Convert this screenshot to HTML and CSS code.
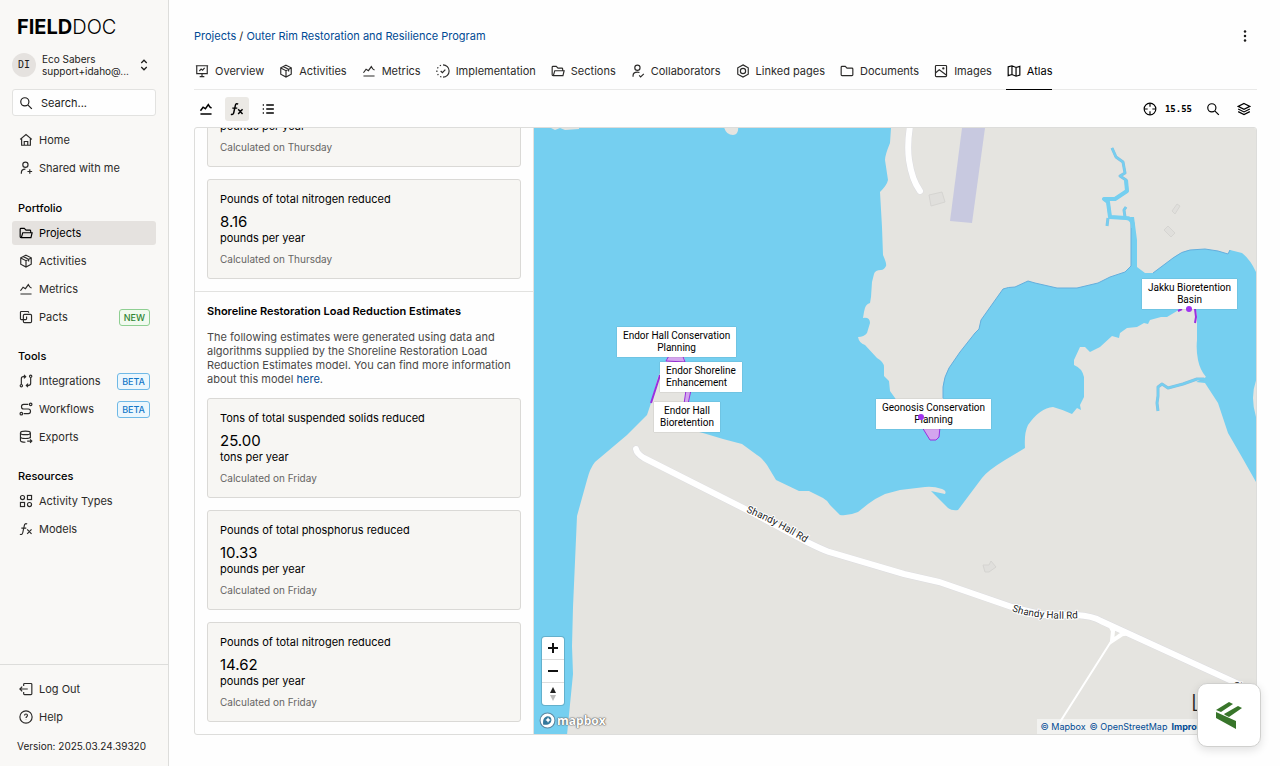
FILE: index.html
```html
<!DOCTYPE html>
<html lang="en">
<head>
<meta charset="UTF-8" />
<meta name="viewport" content="width=device-width, initial-scale=1" />
<title>Outer Rim Restoration and Resilience Program - Atlas</title>
<link rel="stylesheet" href="styles.css">
</head>
<body>

<!-- Icon sprite -->
<svg class="sprite" aria-hidden="true">
  <symbol id="i-search" viewBox="0 0 24 24"><circle cx="10" cy="10" r="7"/><path d="M15.5 15.5 22 22"/></symbol>
  <symbol id="i-home" viewBox="0 0 24 24"><path d="M2 11 12 2.500 22 11M4.500 9.500V21h15V9.500M9 21v-6.500h6V21"/></symbol>
  <symbol id="i-user-plus" viewBox="0 0 24 24"><circle cx="11" cy="6.500" r="4.500"/><path d="M4 22v-2c0-3.500 2.500-6 7-6M18.500 14v8M14.500 18h8"/></symbol>
  <symbol id="i-user-check" viewBox="0 0 24 24"><circle cx="11" cy="6.500" r="4.500"/><path d="M3.500 22v-2c0-3.500 3-6 7.500-6 1.500 0 2.500.2 3.500.6M14 19.500l2.500 2.500 5.500-5"/></symbol>
  <symbol id="i-folder-open" viewBox="0 0 24 24"><path d="M5 20H3.500C2.500 20 2 19.500 2 18.500v-13C2 4.500 2.500 4 3.500 4H9l3 3h6.500c1 0 1.500.5 1.500 1.500V11M4 20l2.500-8.500h16L20.500 20z"/></symbol>
  <symbol id="i-folder" viewBox="0 0 24 24"><path d="M2 5.500C2 4.500 2.500 4 3.500 4H9l3 3h8.500c1 0 1.500.5 1.500 1.500v10c0 1-.5 1.500-1.500 1.500h-17c-1 0-1.500-.5-1.500-1.500z"/></symbol>
  <symbol id="i-box" viewBox="0 0 24 24"><path d="M12 2 21 6.500v11L12 22.500 3 17.500v-11zM3 7l9 4.500L21 7M12 11.500v11M7.500 4.500l9 4.500v4"/></symbol>
  <symbol id="i-metrics" viewBox="0 0 24 24"><path d="M2.500 20.500h19M2.500 15l4.500-6 4 2.500 5-7 2.500 4 3 2"/></symbol>
  <symbol id="i-copy" viewBox="0 0 24 24"><rect x="7.500" y="7.500" width="14" height="14" rx="2"/><path d="M16.500 4.500V4c0-1-.5-1.500-1.500-1.500H4C3 2.500 2.500 3 2.500 4v11c0 1 .5 1.500 1.500 1.500h7.500c1 0 1.500-.5 1.500-1.500v-4"/></symbol>
  <symbol id="i-integrations" viewBox="0 0 24 24"><circle cx="4" cy="20" r="2"/><circle cx="20" cy="4" r="2"/><path d="M4 17.500V8c0-2 1-3.500 3.500-3.500H11M8.500 1.500l3 3-3 3M20 6.500V16c0 2-1 3.500-3.500 3.500H13M15.500 16.500l-3 3 3 3"/></symbol>
  <symbol id="i-workflows" viewBox="0 0 24 24"><circle cx="4" cy="20" r="2.200"/><circle cx="20" cy="4" r="2.200"/><path d="M16 4H8c-5 0-5 8 0 8h8c5 0 5 8 0 8H8"/></symbol>
  <symbol id="i-exports" viewBox="0 0 24 24"><ellipse cx="11" cy="5" rx="8.500" ry="3"/><path d="M2.500 5v13c0 2 4 3 8.500 3M19.500 5v9M2.500 11.500c0 2 4 3 8.500 3s8.500-1 8.500-3M14 19h8M19 16l3 3-3 3"/></symbol>
  <symbol id="i-types" viewBox="0 0 24 24"><circle cx="6" cy="6" r="3.500"/><rect x="14.500" y="2.500" width="7" height="7"/><rect x="2.500" y="14.500" width="7" height="7"/><circle cx="18" cy="18" r="3.500"/></symbol>
  <symbol id="i-fx" viewBox="0 0 24 24"><path d="M14 3.500c-3-1.500-4.500 0-5 3L6.500 18c-.6 3-2 4-5 3M4 10.500h8.500M14 12.500l7.500 8M21.500 12.500l-7.500 8"/></symbol>
  <symbol id="i-logout" viewBox="0 0 24 24"><path d="M8 7V4c0-1 .5-1.500 1.500-1.500h11c1 0 1.500.5 1.500 1.500v16c0 1-.5 1.500-1.500 1.500h-11C8.500 21.500 8 21 8 20v-3M15 12H1.500M5.500 8l-4 4 4 4"/></symbol>
  <symbol id="i-help" viewBox="0 0 24 24"><circle cx="12" cy="12" r="10.500"/><path d="M9.500 9.500c0-3.500 5-3.500 5 0 0 2-2.500 2-2.500 4M12 16.500v.8"/></symbol>
  <symbol id="i-sort" viewBox="0 0 24 24"><path d="M6.500 8 12 2.500 17.500 8M6.500 16l5.500 5.500 5.500-5.500"/></symbol>
  <symbol id="i-overview" viewBox="0 0 24 24"><path d="M1.500 3h21M3 3v13.500h18V3M12 16.500V21M8 21.500h8M7.500 12l3-3.500 2.500 2 3.500-4"/></symbol>
  <symbol id="i-progress" viewBox="0 0 24 24"><path d="M12 1.500a10.500 10.500 0 0 1 0 21M8.500 2.100l-2 .9M3.700 5.500l-1.200 2M1.500 11v2.500M2.800 17.200l1.200 1.900M7 21.300l2.300.9M8 12l3 3 5-5.500"/></symbol>
  <symbol id="i-linked" viewBox="0 0 24 24"><path d="M12 1.500 21 6.500v11l-9 5-9-5v-11z"/><circle cx="12" cy="12" r="4.500"/></symbol>
  <symbol id="i-image" viewBox="0 0 24 24"><rect x="2.500" y="2.500" width="19" height="19" rx="1.500"/><path d="M2.500 15.500 9 10l12 9"/><circle cx="16" cy="7.500" r="1"/></symbol>
  <symbol id="i-map" viewBox="0 0 24 24"><path d="M2 5l6.500-2 7 3L22 4v15l-6.500 2-7-3L2 20zM8.500 3v15M15.500 6v15"/></symbol>
  <symbol id="i-list" viewBox="0 0 24 24"><path d="M9 5h13M9 12h13M9 19h13M3 5h2M3 12h2M3 19h2"/></symbol>
  <symbol id="i-crosshair" viewBox="0 0 24 24"><circle cx="12" cy="12" r="10"/><path d="M12 2v6M12 16v6M2 12h6M16 12h6"/></symbol>
  <symbol id="i-layers" viewBox="0 0 24 24"><path d="M12 2.500 22 7.500l-10 5-10-5zM2 12l10 5 10-5M2 16.500l10 5 10-5"/></symbol>
</svg>

<aside class="sidebar">
  <div class="sidebar-top">
    <a class="logo" href="#"><b>FIELD</b>DOC</a>

    <button class="account" type="button">
      <span class="avatar">DI</span>
      <span class="account-name">Eco Sabers<br>support+idaho@...</span>
      <svg class="icon sm bold"><use href="#i-sort"/></svg>
    </button>

    <label class="search">
      <svg class="icon"><use href="#i-search"/></svg>
      <input type="text" placeholder="Search..." aria-label="Search" />
    </label>

    <nav class="nav primary">
      <a href="#"><svg class="icon"><use href="#i-home"/></svg>Home</a>
      <a href="#"><svg class="icon"><use href="#i-user-plus"/></svg>Shared with me</a>
    </nav>

    <nav class="nav">
      <h2>Portfolio</h2>
      <a class="active" href="#"><svg class="icon"><use href="#i-folder-open"/></svg>Projects</a>
      <a href="#"><svg class="icon"><use href="#i-box"/></svg>Activities</a>
      <a href="#"><svg class="icon"><use href="#i-metrics"/></svg>Metrics</a>
      <a href="#"><svg class="icon"><use href="#i-copy"/></svg>Pacts<span class="tag new">NEW</span></a>
    </nav>

    <nav class="nav">
      <h2>Tools</h2>
      <a href="#"><svg class="icon"><use href="#i-integrations"/></svg>Integrations<span class="tag beta">BETA</span></a>
      <a href="#"><svg class="icon"><use href="#i-workflows"/></svg>Workflows<span class="tag beta">BETA</span></a>
      <a href="#"><svg class="icon"><use href="#i-exports"/></svg>Exports</a>
    </nav>

    <nav class="nav">
      <h2>Resources</h2>
      <a href="#"><svg class="icon"><use href="#i-types"/></svg>Activity Types</a>
      <a href="#"><svg class="icon"><use href="#i-fx"/></svg>Models</a>
    </nav>
  </div>

  <div class="sidebar-bottom">
    <nav class="nav">
      <a href="#"><svg class="icon"><use href="#i-logout"/></svg>Log Out</a>
      <a href="#"><svg class="icon"><use href="#i-help"/></svg>Help</a>
    </nav>
    <p class="version">Version: 2025.03.24.39320</p>
  </div>
</aside>

<main class="main">
  <header class="page-header">
    <div class="breadcrumb">
      <a href="#">Projects</a> / <a href="#">Outer Rim Restoration and Resilience Program</a>
    </div>
    <button class="icon-btn" type="button" aria-label="More">
      <svg class="icon dots" viewBox="0 0 24 24"><circle cx="12" cy="3" r="2.500"/><circle cx="12" cy="12" r="2.500"/><circle cx="12" cy="21" r="2.500"/></svg>
    </button>
  </header>

  <nav class="tabs">
    <a href="#"><svg class="icon"><use href="#i-overview"/></svg>Overview</a>
    <a href="#"><svg class="icon"><use href="#i-box"/></svg>Activities</a>
    <a href="#"><svg class="icon"><use href="#i-metrics"/></svg>Metrics</a>
    <a href="#"><svg class="icon"><use href="#i-progress"/></svg>Implementation</a>
    <a href="#"><svg class="icon"><use href="#i-folder-open"/></svg>Sections</a>
    <a href="#"><svg class="icon"><use href="#i-user-check"/></svg>Collaborators</a>
    <a href="#"><svg class="icon"><use href="#i-linked"/></svg>Linked pages</a>
    <a href="#"><svg class="icon"><use href="#i-folder"/></svg>Documents</a>
    <a href="#"><svg class="icon"><use href="#i-image"/></svg>Images</a>
    <a class="active" href="#"><svg class="icon"><use href="#i-map"/></svg>Atlas</a>
  </nav>

  <div class="toolbar">
    <button class="icon-btn" type="button" aria-label="Metrics"><svg class="icon bold"><use href="#i-metrics"/></svg></button>
    <button class="icon-btn on" type="button" aria-label="Models"><svg class="icon bold"><use href="#i-fx"/></svg></button>
    <button class="icon-btn" type="button" aria-label="List"><svg class="icon bold"><use href="#i-list"/></svg></button>
    <div class="zoom-level"><svg class="icon"><use href="#i-crosshair"/></svg>15.55</div>
    <button class="icon-btn" type="button" aria-label="Search map"><svg class="icon"><use href="#i-search"/></svg></button>
    <button class="icon-btn" type="button" aria-label="Layers"><svg class="icon"><use href="#i-layers"/></svg></button>
  </div>

  <div class="atlas">
    <section class="panel">
      <div class="group">
        <article class="card">
          <p class="unit">pounds per year</p>
          <p class="date">Calculated on Thursday</p>
        </article>
        <article class="card">
          <h4>Pounds of total nitrogen reduced</h4>
          <p class="value">8.16</p>
          <p class="unit">pounds per year</p>
          <p class="date">Calculated on Thursday</p>
        </article>
      </div>
      <div class="group">
        <h3>Shoreline Restoration Load Reduction Estimates</h3>
        <p class="desc">The following estimates were generated using data and algorithms supplied by the Shoreline Restoration Load Reduction Estimates model. You can find more information about this model <a href="#">here</a>.</p>
        <article class="card">
          <h4>Tons of total suspended solids reduced</h4>
          <p class="value">25.00</p>
          <p class="unit">tons per year</p>
          <p class="date">Calculated on Friday</p>
        </article>
        <article class="card">
          <h4>Pounds of total phosphorus reduced</h4>
          <p class="value">10.33</p>
          <p class="unit">pounds per year</p>
          <p class="date">Calculated on Friday</p>
        </article>
        <article class="card">
          <h4>Pounds of total nitrogen reduced</h4>
          <p class="value">14.62</p>
          <p class="unit">pounds per year</p>
          <p class="date">Calculated on Friday</p>
        </article>
      </div>
    </section>

    <div class="map">
      <svg class="map-canvas" viewBox="534 128 722 606" preserveAspectRatio="xMinYMin slice">
        <!-- water -->
        <path class="water" d="M534 128H891L890 143Q885 155 885 160L888 180Q887 185 880 192L882 227 883 255Q887 264 886 266 884 270 881 270 875 270 874 274L872 282 871 297 870 303Q865 304 864 312L863 318Q870 317 870 323L867 333Q864 337 858 337 859 343 865 345L877 358Q884 362 884 367V376Q887 379 889 381L890 391 895 398 902 410 921 424 940 412 943 398V387Q944 377 949 368L960 352 975 333 979 329 981 320 1003 289Q1008 287 1015 287L1028 281 1035 283 1057 288H1077L1098 283 1110 277 1125 272 1131 266V217H1134L1137 240V267L1145 273H1153L1173 258Q1182 251 1190 250L1205 249 1218 251 1228 254 1230 250 1242 253Q1250 259 1256 272V482L1243 459 1228 433 1218 403 1205 383 1196 382 1206 377Q1200 370 1198 360 1196 350 1197 340V315L1195 306H1186L1177 311 1167 317H1161L1150 320 1148 324 1144 323 1137 327 1127 328 1120 333 1119 338 1112 336 1100 347 1090 352 1085 347H1080L1074 360V365Q1082 368 1084 377V397L1080 405 1081 410 1077 408 1072 414Q1064 410 1053 407 1040 408 1028 425 1024 433 1025 448L1005 460Q987 471 982 478L967 498 958 510Q952 511 948 508L931 491 945 494Q947 491 942 489 933 486 925 487L900 490 885 494Q876 498 868 504L858 512Q849 516 840 515L830 505Q827 500 823 498L809 491H799L776 480 767 465Q761 457 757 455L742 444 723 439 703 433 684 428 688 405 690 393 684 357 676 350 667 360 658 377 651 403 647 415 627 435 595 462Q590 468 587 480L577 516 573 607 572 646 573 674 567 735H534z"/>
        <path class="land" d="M724 127Q726 135 733 135 739 134 738 127zM549 127l6 3 5-2 5 2 14-1v-2zM1257 378q-8 19 0 42z"/>
        <path class="shore" d="M943 398V387Q944 377 949 368L960 352 975 333 979 329 981 320 1003 289Q1008 287 1015 287L1028 281 1035 283 1057 288H1077L1098 283 1110 277 1125 272 1131 266V220M1153 273L1173 258Q1182 251 1190 250L1205 249 1218 251 1228 254 1230 250"/>
        <path class="creek-edge" d="M1133 225Q1133 218 1126 218L1110 217 1108 202 1104 199 1115 199 1127 191 1126 180 1120 176 1125 173 1123 162 1116 157 1112 148M1125 217l-1-7 2-3M1108 218l-1 8M1204 379L1197 379 1183 384 1168 388 1162 384 1158 387 1158 396 1157 403 1158 411"/>
        <path class="creek" d="M1133 228Q1133 218 1126 218L1110 217 1108 202 1104 199 1115 199 1127 191 1126 180"/>
        <path class="creek thin" d="M1126 180L1120 176 1125 173 1123 162 1116 157 1112 148M1125 217l-1-7 2-3M1108 218l-1 8M1206 379L1197 379 1183 384 1168 388 1162 384 1158 387 1158 396 1157 403 1158 411"/>

        <!-- runway and buildings -->
        <path class="runway" d="M962 128H985L972 223 950 221z"/>
        <path class="building" d="M929 195l13-3 3 10-14 4zM1177 204l3 2-5 8-3-3zM1168 226l7 7-4 4-7-7zM983 565l6 0 2-4 5 6-7 5-4 0z"/>

        <!-- roads -->
        <g class="road-edge">
          <path d="M636 449Q637 454 644 458L747 510 807 542Q821 549 829 552L904 574 939 582 1012 607 1044 615 1076 615Q1093 616 1101 621L1256 692"/>
          <path d="M910 126Q907 145 909 160 912 180 920 191"/>
        </g>
        <g class="road">
          <path d="M636 449Q637 454 644 458L747 510 807 542Q821 549 829 552L904 574 939 582 1012 607 1044 615 1076 615Q1093 616 1101 621L1256 692"/>
          <path d="M910 126Q907 145 909 160 912 180 920 191"/>
          <path class="narrow" d="M1110 625L1113 631 1112 641 1118 637Q1123 632 1131 634"/>
          <path class="lane" d="M1112 640L1060 722"/>
        </g>
        <path id="rd1" class="guide" d="M746 512Q776 524 812 547"/>
        <path id="rd2" class="guide" d="M1012 611Q1038 621 1085 618"/>
        <text class="road-name"><textPath href="#rd1">Shandy Hall Rd</textPath></text>
        <text class="road-name"><textPath href="#rd2">Shandy Hall Rd</textPath></text>
        <text class="road-name" x="1234" y="690">St</text>
        <text class="place-name" x="1191" y="711">L</text>

        <!-- activity shapes -->
        <path class="shape" d="M666 361l4-7h12l3 8zM686 390h5l-3 14h-4z"/>
        <path class="shape" d="M922 427h18l-1 10-3 3h-6z"/>
        <path class="line" d="M660 375l-9 28M1195 309l1 8-1 6M1178 311l4-2"/>
      </svg>

      <div class="label endor-planning">Endor Hall Conservation<br>Planning</div>
      <div class="label endor-shoreline">Endor Shoreline<br>Enhancement</div>
      <div class="label endor-bio">Endor Hall<br>Bioretention</div>
      <div class="label geonosis">Geonosis Conservation<br>Planning</div>
      <div class="label jakku">Jakku Bioretention<br>Basin</div>
      <span class="dot dot-geonosis"></span>
      <span class="dot dot-jakku"></span>

      <div class="map-controls">
        <button type="button" aria-label="Zoom in"><svg viewBox="0 0 22 22"><path d="M11 6v10M6 11h10"/></svg></button>
        <button type="button" aria-label="Zoom out"><svg viewBox="0 0 22 22"><path d="M6 11h10"/></svg></button>
        <button type="button" aria-label="Reset bearing"><svg class="compass" viewBox="0 0 22 22"><path d="M8 10l3-6 3 6z"/><path class="south" d="M8 12l3 6 3-6z"/></svg></button>
      </div>

      <a class="mapbox" href="#" aria-label="Mapbox">
        <svg viewBox="0 0 16 16"><circle class="ring" cx="8" cy="8" r="7"/><path class="mark" d="M4 12c-.6-4 .4-7.500 4.300-8 3 0 4.500 3.500 2.500 6-1.600 2-4 2.300-6.800 2z"/><path class="star" d="M8.500 5l.9 1.600 1.600.9-1.600.9-.9 1.600-.9-1.600-1.600-.9 1.600-.9z"/></svg>
        <span>mapbox</span>
      </a>

      <div class="attribution">
        <a href="#">© Mapbox</a>
        <a href="#">© OpenStreetMap</a>
        <a href="#"><b>Improve this map</b></a>
      </div>
    </div>
  </div>
</main>

<button class="launcher" type="button" aria-label="Open help">
  <svg viewBox="0 0 28 28"><path d="M1 9 14 1l4 2L6 11zM9 13 23 5l4 2-13 9-4-2zM1 11l20 9v8L1 17z"/></svg>
</button>

</body>
</html>
```
FILE: styles.css
```css
* {
  box-sizing: border-box;
}
body {
  margin: 0;
  height: 100vh;
  display: flex;
  overflow: hidden;
  font-family: Inter, "Liberation Sans", sans-serif;
  font-size: 11px;
  color: #1c1b1a;
  background: #fefefe;
}
h2, h3, h4, p {
  margin: 0;
}
a {
  color: #004a94;
  text-decoration: none;
}
button {
  font: inherit;
  color: inherit;
  padding: 0;
  border: none;
  background: none;
  cursor: pointer;
}
.sprite {
  display: none;
}
.icon {
  width: 14px;
  height: 14px;
  flex: none;
  fill: none;
  stroke: currentColor;
  stroke-width: 2;
}
.icon.sm {
  width: 12px;
  height: 12px;
}
.icon.bold {
  stroke-width: 2.5;
}
.icon.dots {
  fill: currentColor;
  stroke: none;
  width: 12px;
  height: 12px;
}

/* Sidebar */
.sidebar {
  width: 169px;
  flex: none;
  display: flex;
  flex-direction: column;
  justify-content: space-between;
  background: #f9f8f6;
  border-right: 1px solid #dddddb;
}
.sidebar-top {
  padding: 15px 12px 0;
}
.logo {
  display: block;
  padding-left: 5px;
  font-size: 20px;
  line-height: 24px;
  font-weight: 300;
  color: #000;
}
.logo b {
  font-weight: 700;
}
.account {
  display: flex;
  align-items: center;
  width: 100%;
  margin: 14px 0 12px;
  text-align: left;
}
.avatar {
  width: 24px;
  height: 24px;
  margin-right: 6px;
  border-radius: 50%;
  background: #e5e2df;
  font: 10px/24px "DejaVu Sans Mono", monospace;
  text-align: center;
}
.account-name {
  flex: 1;
  font-size: 10px;
  line-height: 12px;
  white-space: nowrap;
}
.account .icon {
  margin-right: 6px;
}
.search {
  display: flex;
  align-items: center;
  height: 27px;
  padding-left: 6px;
  border: 1px solid #e2e2e0;
  border-radius: 3px;
  background: #fefefe;
}
.search input {
  width: 100%;
  min-width: 0;
  padding: 0 8px;
  border: none;
  outline: none;
  background: none;
  font: inherit;
}
.search input::placeholder {
  color: #1c1b1a;
}
.nav {
  display: flex;
  flex-direction: column;
  gap: 4px;
  margin-bottom: 18px;
}
.nav.primary {
  margin: 12px 0 19px;
}
.nav h2 {
  padding-left: 6px;
  font-size: 11px;
  line-height: 18px;
  font-weight: 500;
  color: #000;
}
.nav a {
  display: flex;
  align-items: center;
  gap: 6px;
  height: 24px;
  padding: 0 6px 0 7px;
  border-radius: 3px;
  color: #2b2a29;
}
.nav a.active {
  background: #e5e2df;
  color: #000;
}
.tag {
  margin-left: auto;
  padding: 0 4px;
  border: 1px solid;
  border-radius: 3px;
  font-size: 9px;
  line-height: 15px;
  font-weight: 500;
}
.tag.new {
  color: #2f8534;
  background: #f1faef;
  border-color: #8fcf92;
}
.tag.beta {
  color: #1478c8;
  background: #ecf7fd;
  border-color: #6fb9e6;
}
.sidebar-bottom {
  padding: 12px;
  border-top: 1px solid #dddddb;
}
.sidebar-bottom .nav {
  margin-bottom: 9px;
}
.version {
  padding-left: 5px;
  font-size: 10px;
  line-height: 16px;
}

/* Main */
.main {
  flex: 1;
  min-width: 0;
  display: flex;
  flex-direction: column;
  padding: 24px 23px 31px 25px;
}
.page-header {
  display: flex;
  align-items: center;
  justify-content: space-between;
}
.breadcrumb {
  font-size: 11px;
}
.icon-btn {
  display: flex;
  align-items: center;
  justify-content: center;
  width: 24px;
  height: 24px;
  border-radius: 3px;
}
.icon-btn.on {
  background: #ebe9e5;
}
.tabs {
  display: flex;
  gap: 14px;
  margin-top: 4px;
  border-bottom: 1px solid #e9e9e8;
}
.tabs a {
  display: flex;
  align-items: center;
  gap: 6px;
  height: 38px;
  margin-bottom: -1px;
  padding-left: 1px;
  border-bottom: 1px solid transparent;
  white-space: nowrap;
  color: #2b2a29;
}
.tabs a.active {
  border-color: #000;
  color: #000;
}
.toolbar {
  display: flex;
  align-items: center;
  gap: 7px;
  padding: 7px 1px 6px 0;
  color: #000;
}
.zoom-level {
  display: flex;
  align-items: center;
  gap: 8px;
  margin-left: auto;
  padding-right: 2px;
  font-family: "DejaVu Sans Mono", monospace;
  font-size: 9px;
  font-weight: 700;
}
.atlas {
  flex: 1;
  min-height: 0;
  display: flex;
  border: 1px solid #dddddb;
  border-radius: 3px;
  overflow: hidden;
}

/* Estimates panel, scrolled to its end */
.panel {
  width: 339px;
  flex: none;
  display: flex;
  flex-direction: column;
  justify-content: flex-end;
  overflow: hidden;
  border-right: 1px solid #e2e2e0;
}
.group {
  display: flex;
  flex-direction: column;
  gap: 12px;
  padding: 12px;
}
.group + .group {
  border-top: 1px solid #e2e2e0;
}
.group h3 {
  font-size: 11px;
  line-height: 14px;
  font-weight: 600;
  color: #000;
}
.desc {
  line-height: 14px;
  color: #4a4948;
}
.card {
  padding: 12px;
  border: 1px solid #dad9d6;
  border-radius: 3px;
  background: #f7f6f3;
}
.card h4 {
  font-size: 11px;
  line-height: 14px;
  font-weight: 400;
  color: #000;
}
.value {
  margin-top: 7px;
  font-size: 15px;
  line-height: 18px;
  color: #000;
}
.unit {
  line-height: 14px;
  color: #000;
}
.date {
  margin-top: 7px;
  font-size: 10px;
  line-height: 14px;
  color: #666563;
}

/* Map */
.map {
  position: relative;
  flex: 1;
  min-width: 0;
  overflow: hidden;
  background: #e5e4e0;
  font-family: Roboto, sans-serif;
}
.map-canvas {
  display: block;
  width: 100%;
  height: 100%;
  fill: none;
}
.water {
  fill: #75cff0;
}
.land {
  fill: #e5e4e0;
}
.shore {
  stroke: #64aedd;
}
.creek-edge {
  stroke: #86bfe0;
  stroke-width: 3;
  stroke-linejoin: round;
}
.creek {
  stroke: #75cff0;
  stroke-width: 4;
  stroke-linejoin: round;
}
.creek.thin {
  stroke-width: 2;
}
.runway {
  fill: #c8c9e0;
}
.building {
  fill: #e0dfdc;
  stroke: #d5d4d1;
}
.road-edge {
  stroke: #dcdce0;
  stroke-width: 7;
  stroke-linecap: round;
}
.road {
  stroke: #fff;
  stroke-width: 6;
  stroke-linecap: round;
}
.road .narrow {
  stroke-width: 4;
}
.road .lane {
  stroke-width: 2;
}
.road-name {
  font-size: 10px;
  fill: #222;
  stroke: #fff;
  stroke-width: 2;
  paint-order: stroke;
}
.place-name {
  font-size: 24px;
  font-weight: 300;
  fill: #222;
}
.shape {
  fill: #d3a5ee;
  stroke: #9a2fe0;
}
.line {
  stroke: #9a2fe0;
  stroke-width: 2;
}
.label {
  position: absolute;
  padding: 3px 6px;
  background: #fff;
  box-shadow: 0 0 1px rgba(0, 0, 0, 0.3);
  font-size: 10px;
  line-height: 12px;
  text-align: center;
  white-space: nowrap;
  color: #000;
}
.endor-planning {
  left: 83px;
  top: 199px;
}
.endor-shoreline {
  left: 126px;
  top: 234px;
  text-align: left;
}
.endor-bio {
  left: 120px;
  top: 274px;
}
.geonosis {
  left: 342px;
  top: 271px;
}
.jakku {
  left: 608px;
  top: 151px;
}
.dot {
  position: absolute;
  width: 6px;
  height: 6px;
  border-radius: 50%;
  background: #a033f0;
}
.dot-geonosis {
  left: 384px;
  top: 286px;
}
.dot-jakku {
  left: 652px;
  top: 178px;
}
.map-controls {
  position: absolute;
  left: 8px;
  bottom: 29px;
  width: 22px;
  border-radius: 3px;
  background: #fff;
  box-shadow: 0 0 0 1px rgba(0, 0, 0, 0.15);
}
.map-controls button {
  display: block;
  width: 22px;
  height: 22px;
}
.map-controls button + button {
  height: 23px;
  border-top: 1px solid #ddd;
}
.map-controls svg {
  display: block;
  fill: none;
  stroke: #111;
  stroke-width: 2;
}
.map-controls .compass {
  fill: #222;
  stroke: none;
}
.map-controls .south {
  fill: #bbb;
}
.mapbox {
  position: absolute;
  left: 5px;
  bottom: 5px;
  display: flex;
  align-items: center;
  gap: 1px;
  font: 700 12px/16px "Open Sans", sans-serif;
  color: #fff;
  text-shadow: 0 0 1px #555, 0 0 1px #555, 0 0 2px #777;
}
.mapbox svg {
  width: 17px;
  height: 17px;
}
.mapbox .ring {
  fill: #fff;
  stroke: #5e87a0;
}
.mapbox .mark {
  fill: #33789c;
}
.mapbox .star {
  fill: #fff;
}
.attribution {
  position: absolute;
  right: 0;
  bottom: 0;
  display: flex;
  gap: 4px;
  padding: 0 9px 0 4px;
  background: rgba(255, 255, 255, 0.5);
  font: 9px/15px Inter, sans-serif;
  white-space: nowrap;
}
.launcher {
  position: fixed;
  right: 19px;
  bottom: 19px;
  width: 64px;
  height: 64px;
  border: 1px solid #d0d0ce;
  border-radius: 10px;
  background: #fff;
  box-shadow: 0 3px 10px rgba(0, 0, 0, 0.12);
}
.launcher svg {
  display: block;
  width: 28px;
  height: 28px;
  margin: 0 auto;
  fill: #38752a;
}
```
